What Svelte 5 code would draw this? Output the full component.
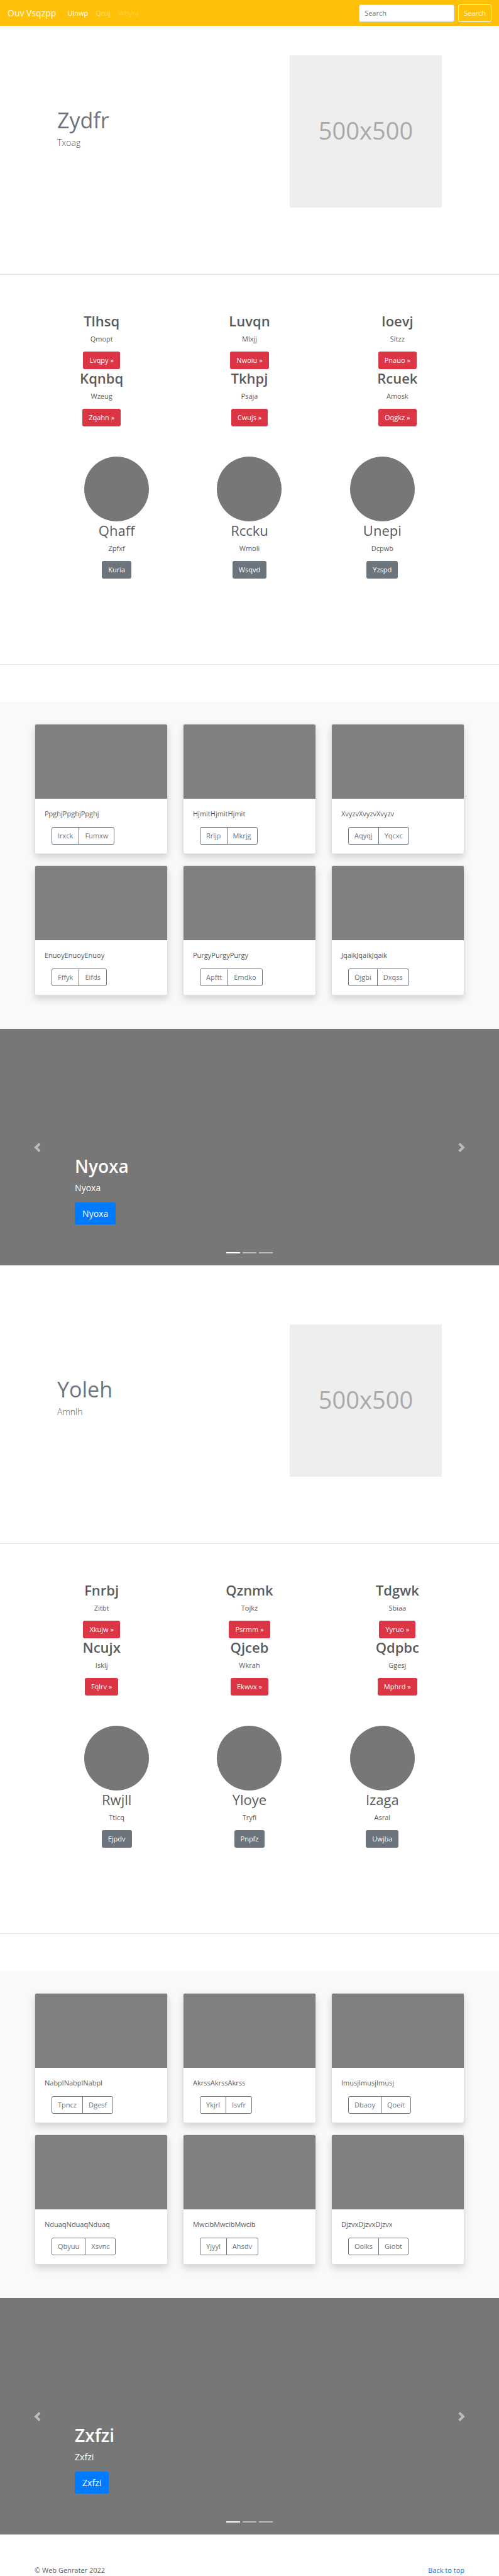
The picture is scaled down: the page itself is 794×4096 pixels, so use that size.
<script>
  const sections = [
    {
      title: 'Zydfr', sub: 'Txoag', slide: 'Nyoxa',
      features: [
        ['Tlhsq', 'Qmopt', 'Lvqpy'], ['Luvqn', 'Mlxjj', 'Nwoiu'], ['Ioevj', 'Sltzz', 'Pnauo'],
        ['Kqnbq', 'Wzeug', 'Zqahn'], ['Tkhpj', 'Psaja', 'Cwujs'], ['Rcuek', 'Amosk', 'Oqgkz']
      ],
      people: [['Qhaff', 'Zpfxf', 'Kuria'], ['Rccku', 'Wmoli', 'Wsqvd'], ['Unepi', 'Dcpwb', 'Yzspd']],
      cards: [
        ['Ppghj', 'Irxck', 'Fumxw'], ['Hjmit', 'Rrljp', 'Mkrjg'], ['Xvyzv', 'Aqyqj', 'Yqcxc'],
        ['Enuoy', 'Fffyk', 'Eifds'], ['Purgy', 'Apftt', 'Emdko'], ['Jqaik', 'Ojgbi', 'Dxqss']
      ]
    },
    {
      title: 'Yoleh', sub: 'Amnlh', slide: 'Zxfzi',
      features: [
        ['Fnrbj', 'Zitbt', 'Xkujw'], ['Qznmk', 'Tojkz', 'Psrmm'], ['Tdgwk', 'Sbiaa', 'Yyruo'],
        ['Ncujx', 'Isklj', 'Fqlrv'], ['Qjceb', 'Wkrah', 'Ekwvx'], ['Qdpbc', 'Ggesj', 'Mphrd']
      ],
      people: [['Rwjll', 'Ttlcq', 'Ejpdv'], ['Yloye', 'Tryfi', 'Pnpfz'], ['Izaga', 'Asral', 'Uwjba']],
      cards: [
        ['Nabpl', 'Tpncz', 'Dgesf'], ['Akrss', 'Ykjrl', 'Isvfr'], ['Imusj', 'Dbaoy', 'Qoeit'],
        ['Nduaq', 'Qbyuu', 'Xsvnc'], ['Mwcib', 'Yjyyl', 'Ahsdv'], ['Djzvx', 'Oolks', 'Giobt']
      ]
    }
  ];
</script>

<header class="navbar" id="top">
  <a class="brand" href="#top">Ouv Vsqzpp</a>
  <nav>
    <a class="active" href="#top">Ulnwp</a>
    <a href="#top">Qniij</a>
    <a class="disabled" href="#top">Wbyra</a>
  </nav>
  <form onsubmit={(e) => e.preventDefault()}>
    <input type="search" placeholder="Search" aria-label="Search" />
    <button type="submit">Search</button>
  </form>
</header>

<main>
  {#each sections as s}
    <section class="hero">
      <div class="hero-text">
        <h2>{s.title}</h2>
        <p>{s.sub}</p>
      </div>
      <svg class="placeholder" viewBox="0 0 242 242" role="img" aria-label="500x500">
        <rect width="242" height="242" fill="#eee" />
        <text x="121" y="134" text-anchor="middle">500x500</text>
      </svg>
    </section>
    <hr />

    <section class="features">
      {#each s.features as [name, text, action]}
        <div class="cell">
          <h2>{name}</h2>
          <p>{text}</p>
          <a class="btn danger" href="#top">{action} »</a>
        </div>
      {/each}
    </section>
    <section class="people">
      {#each s.people as [name, text, action]}
        <div class="cell">
          <div class="avatar"></div>
          <h2>{name}</h2>
          <p>{text}</p>
          <a class="btn secondary" href="#top">{action}</a>
        </div>
      {/each}
    </section>
    <hr />

    <section class="album">
      <div class="cards">
        {#each s.cards as [text, first, second]}
          <article class="card">
            <div class="thumb"></div>
            <div class="card-body">
              <p>{text}{text}{text}</p>
              <div class="group">
                <button type="button">{first}</button>
                <button type="button">{second}</button>
              </div>
            </div>
          </article>
        {/each}
      </div>
    </section>

    <section class="carousel">
      <button class="arrow prev" type="button" aria-label="Previous">
        <svg viewBox="0 0 8 8"><path d="M5.25 0l-4 4 4 4 1.5-1.5L4.25 4l2.5-2.5L5.25 0z" /></svg>
      </button>
      <div class="caption">
        <h1>{s.slide}</h1>
        <p>{s.slide}</p>
        <a class="btn primary" href="#top">{s.slide}</a>
      </div>
      <button class="arrow next" type="button" aria-label="Next">
        <svg viewBox="0 0 8 8"><path d="M2.75 0l-1.5 1.5L3.75 4l-2.5 2.5L2.75 8l4-4-4-4z" /></svg>
      </button>
      <div class="dots"><i class="on"></i><i></i><i></i></div>
    </section>
  {/each}
</main>

<footer>
  <span>© Web Genrater 2022</span>
  <a href="#top">Back to top</a>
</footer>

<style>
  :global(body) {
    margin: 0;
    background: #fff;
    color: #5a5a5a;
    font: 11px/18px 'Open Sans', 'Noto Sans', sans-serif;
  }
  :global(*) { box-sizing: border-box; }
  h1, h2, p { margin: 0; }
  a { text-decoration: none; color: inherit; }
  button, input { font: inherit; }

  .navbar {
    display: flex;
    align-items: center;
    height: 41px;
    padding: 0 12px;
    background: #ffc107;
    color: #fff;
  }
  .brand { font-size: 14px; margin-right: 12px; }
  nav { display: flex; flex: 1; }
  nav a { padding: 0 6px; color: rgba(255, 255, 255, 0.5); }
  nav .active { color: #fff; }
  nav .disabled { color: rgba(255, 255, 255, 0.25); }
  form { display: flex; gap: 6px; }
  form input {
    width: 152px;
    height: 28px;
    padding: 0 8px;
    border: 1px solid #ced4da;
    border-radius: 3px;
    background: #fff;
    color: #495057;
  }
  form input::placeholder { color: #6c757d; opacity: 1; }
  form button {
    height: 28px;
    padding: 0 8px;
    border: 1px solid #f8f9fa;
    border-radius: 3px;
    background: none;
    color: #f8f9fa;
  }

  .hero {
    display: flex;
    justify-content: space-between;
    align-items: center;
    padding: 47px 91px 106px;
  }
  .hero-text { padding-bottom: 12px; }
  .hero-text h2 {
    font-size: 34px;
    line-height: 44px;
    font-weight: 400;
    color: #6c757d;
  }
  .hero-text p {
    margin-top: 3px;
    font-size: 14px;
    line-height: 22px;
    font-weight: 300;
  }
  .placeholder { display: block; width: 242px; height: 242px; }
  .placeholder text { font: 38px 'Open Sans', sans-serif; fill: #aaa; }
  hr { margin: 0; border: 0; height: 1px; background: #e5e5e5; }

  .features, .people {
    display: grid;
    grid-template-columns: repeat(3, 1fr);
    text-align: center;
  }
  .features { padding: 59px 44px 48px; }
  .people { padding: 0 80px 136px; }
  .cell { display: flex; flex-direction: column; align-items: center; }
  .cell h2 { font-size: 22px; line-height: 28px; font-weight: 400; }
  .features h2 { font-weight: 600; }
  .cell p { margin: 6px 0 12px; line-height: 17px; }
  .avatar { width: 103px; height: 103px; border-radius: 50%; background: #777; }
  .btn {
    display: inline-block;
    padding: 0 10px;
    border-radius: 3px;
    line-height: 28px;
    color: #fff;
  }
  .danger { background: #dc3545; }
  .secondary { background: #6c757d; }
  .primary { background: #007bff; font-size: 14px; line-height: 35px; padding: 0 12px; }

  .album { margin-top: 59px; padding: 35px 55px 53px; background: #f8f9fa; }
  .cards { display: grid; grid-template-columns: repeat(3, 1fr); gap: 18px 24px; }
  .card {
    border: 1px solid #dfdfdf;
    border-radius: 3px;
    background: #fff;
    box-shadow: 0 6px 12px rgba(0, 0, 0, 0.15);
  }
  .thumb { height: 118px; border-radius: 2px 2px 0 0; background: #808080; }
  .card-body { padding: 15px 15px 14px; }
  .card p { margin-bottom: 12px; }
  .group { display: flex; margin-left: 11px; }
  .group button {
    height: 28px;
    padding: 0 9px;
    border: 1px solid #6c757d;
    background: none;
    color: #6c757d;
  }
  .group button:first-child { border-radius: 3px 0 0 3px; }
  .group button:last-child { border-radius: 0 3px 3px 0; margin-left: -1px; }

  .carousel {
    position: relative;
    display: flex;
    justify-content: space-between;
    height: 376px;
    background: #777;
    color: #fff;
  }
  .carousel:not(:last-child) { margin-bottom: 47px; }
  .arrow { width: 15%; padding: 0; border: 0; background: none; opacity: 0.5; }
  .arrow svg { display: block; width: 15px; height: 15px; margin: 0 auto; fill: #fff; }
  .caption { flex: 1; align-self: flex-end; padding-bottom: 65px; }
  .caption h1 { font-size: 28px; line-height: 35px; font-weight: 600; }
  .caption p { margin: 6px 0 12px; font-size: 14px; line-height: 22px; }
  .dots {
    position: absolute;
    inset: auto 0 19px;
    display: flex;
    justify-content: center;
    gap: 4px;
  }
  .dots i { width: 22px; height: 2px; background: rgba(255, 255, 255, 0.5); }
  .dots .on { background: #fff; }

  footer {
    display: flex;
    justify-content: space-between;
    padding: 48px 55px 0;
  }
  footer a { color: #007bff; }
</style>
